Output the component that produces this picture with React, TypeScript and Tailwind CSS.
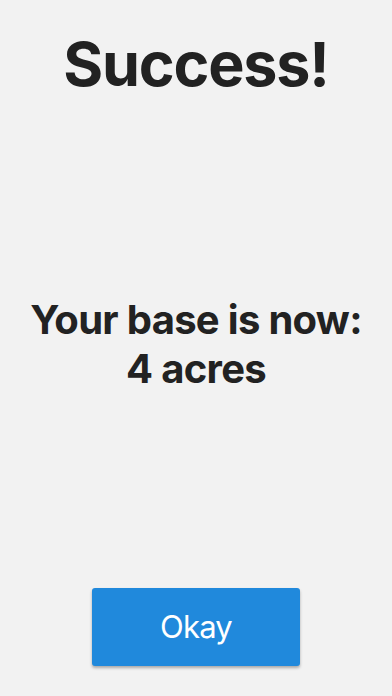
export default function App() {
  return (
    <div
      className="flex h-[696px] w-full flex-col items-center bg-[#f2f2f2] text-[#222222]"
      style={{ fontFamily: "Inter, 'Liberation Sans', sans-serif" }}
    >
      <h1 className="mt-[22px] text-[61px] leading-[84px] font-bold tracking-[-1.2px]">Success!</h1>
      <div className="flex flex-1 items-center justify-center">
        <p className="mt-[-6px] text-center text-[40px] leading-[49px] font-bold tracking-[-0.7px]">
          Your base is now:
          <br />4 acres
        </p>
      </div>
      <button className="mb-[30px] h-[78px] w-[208px] rounded-[3px] bg-[#2089dc] text-[31px] tracking-[-0.8px] text-white shadow-[0_2px_3px_rgba(0,0,0,0.3)]">
        Okay
      </button>
    </div>
  );
}
